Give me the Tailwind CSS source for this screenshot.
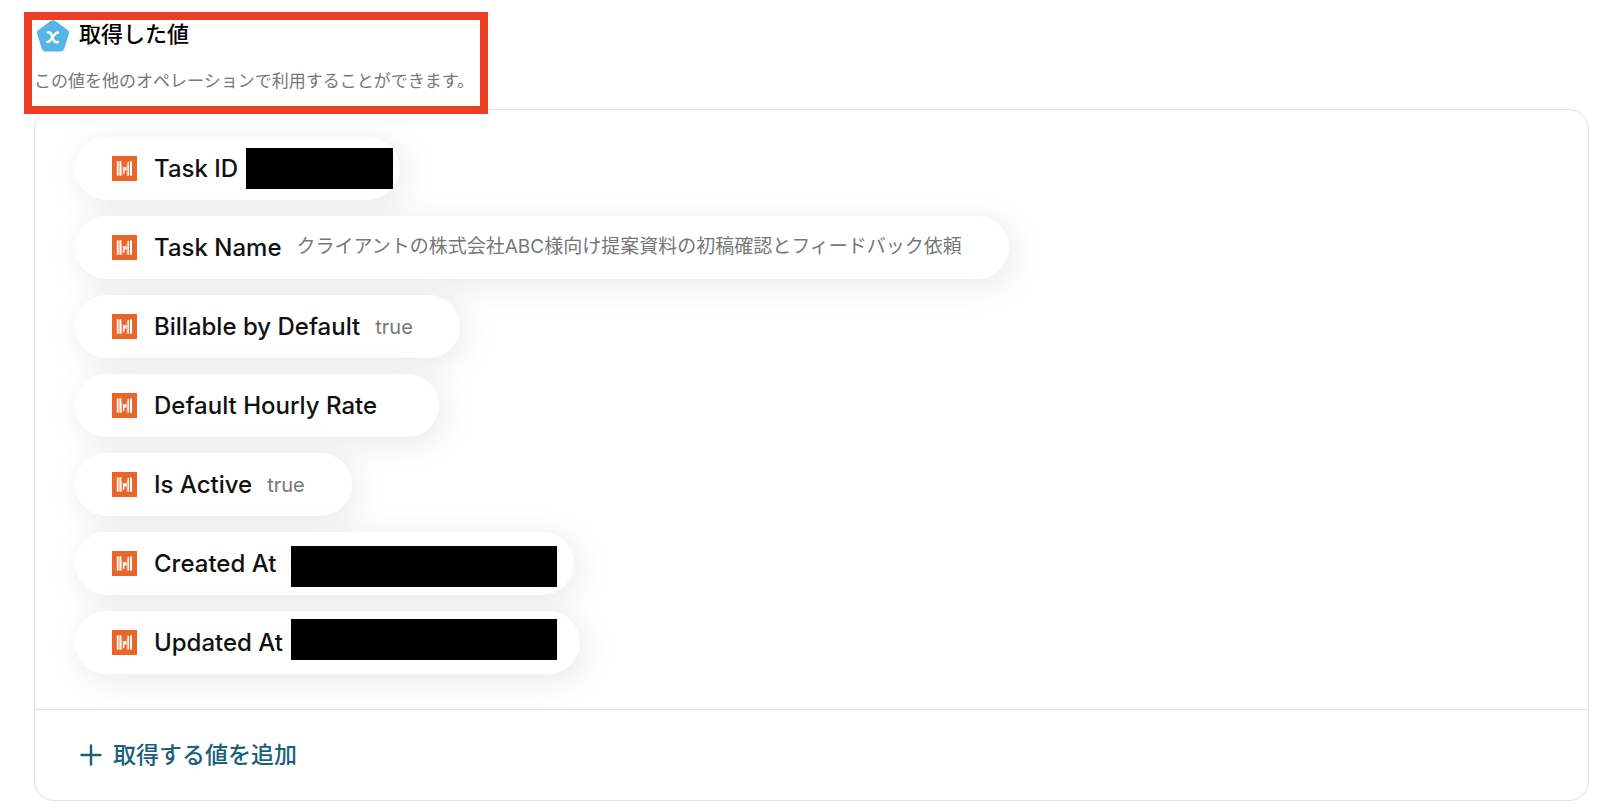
<!DOCTYPE html>
<html lang="ja">
<head>
  <meta charset="UTF-8">
  <title>取得した値</title>
  <script src="https://cdn.jsdelivr.net/npm/@tailwindcss/browser@4"></script>
</head>
<body class="min-h-screen bg-white pt-3 pb-2 font-['Inter','Noto_Sans_CJK_JP',sans-serif] text-[#111111]">
  <!-- Shared logo for every output value -->
  <svg class="hidden">
    <symbol id="logo" viewBox="0 0 25 25">
      <rect width="25" height="25" fill="#e8662a"/>
      <g fill="#fff">
        <rect x="4.8" y="5.3" width="1.8" height="14.4"/>
        <rect x="7.4" y="5.3" width="2" height="14.4"/>
        <rect x="9.4" y="9.5" width="1" height="10.2" opacity=".5"/>
        <path d="M11 11.2h3.6v3.2h-2.2v3.4H11z"/>
        <rect x="14.6" y="8.2" width=".9" height="11.5" opacity=".6"/>
        <rect x="15.5" y="5.9" width="1.6" height="13.8" opacity=".9"/>
        <rect x="18" y="5.3" width="2" height="14.4"/>
      </g>
    </symbol>
  </svg>

  <header class="relative z-10 ml-6 w-fit border-8 border-[#ee3d23] bg-white pr-[6px] pb-3 pl-[2px]">
    <div class="flex items-start gap-[10px] pl-[3px]">
      <svg class="size-8" viewBox="0 0 32 32">
        <path d="M13.6 1.1Q16 -.6 18.4 1.1L30.6 9.9Q32.6 11.4 31.9 13.7L27.2 28.8Q26.2 31.6 23.6 31.6H8.4Q5.8 31.6 4.8 28.8L.1 13.7Q-.6 11.4 1.4 9.9Z" fill="#54b6e4"/>
        <path d="M10.8 12.4c2.6-.3 3.4.6 4.6 4.6s2 5.5 5.4 5.1M21 12.4c-2.2 0-3.2 1.2-5.2 4.4s-3 5.2-5.4 5.2" fill="none" stroke="#fff" stroke-width="2.5" stroke-linecap="round"/>
      </svg>
      <h2 class="text-[22px] leading-7 font-medium text-black">取得した値</h2>
    </div>
    <p class="mt-4 text-[17px] leading-[26px] text-[#777777]">この値を他のオペレーションで利用することができます。</p>
  </header>

  <section class="-mt-[5px] mr-[11px] ml-[34px] rounded-[20px] border border-[#e0e0e0]">
    <ul class="flex flex-col items-start gap-4 px-10 pt-[27px] pb-[35px]">
      <li class="flex h-[63px] items-center rounded-full bg-white pr-[7px] pl-[37px] shadow-[5px_6px_36px_rgba(0,0,0,0.09)]">
        <svg class="size-[25px]"><use href="#logo"/></svg>
        <span class="ml-[17px] text-2xl font-medium">Task ID</span>
        <span class="ml-2 h-[41px] w-[147px] bg-black"></span>
      </li>
      <li class="flex h-[63px] items-center rounded-full bg-white pr-[47px] pl-[37px] shadow-[5px_6px_36px_rgba(0,0,0,0.09)]">
        <svg class="size-[25px]"><use href="#logo"/></svg>
        <span class="ml-[17px] text-2xl font-medium">Task Name</span>
        <span class="ml-[15px] text-[19px] text-[#777777]">クライアントの株式会社ABC様向け提案資料の初稿確認とフィードバック依頼</span>
      </li>
      <li class="flex h-[63px] items-center rounded-full bg-white pr-[47px] pl-[37px] shadow-[5px_6px_36px_rgba(0,0,0,0.09)]">
        <svg class="size-[25px]"><use href="#logo"/></svg>
        <span class="ml-[17px] text-2xl font-medium">Billable by Default</span>
        <span class="ml-[15px] text-xl text-[#777777]">true</span>
      </li>
      <li class="flex h-[63px] items-center rounded-full bg-white pr-[47px] pl-[37px] shadow-[5px_6px_36px_rgba(0,0,0,0.09)]">
        <svg class="size-[25px]"><use href="#logo"/></svg>
        <span class="ml-[17px] text-2xl font-medium">Default Hourly Rate</span>
        <span class="ml-[15px] text-xl text-[#777777]"></span>
      </li>
      <li class="flex h-[63px] items-center rounded-full bg-white pr-[47px] pl-[37px] shadow-[5px_6px_36px_rgba(0,0,0,0.09)]">
        <svg class="size-[25px]"><use href="#logo"/></svg>
        <span class="ml-[17px] text-2xl font-medium">Is Active</span>
        <span class="ml-[15px] text-xl text-[#777777]">true</span>
      </li>
      <li class="flex h-[63px] items-center rounded-full bg-white pr-[17px] pl-[37px] shadow-[5px_6px_36px_rgba(0,0,0,0.09)]">
        <svg class="size-[25px]"><use href="#logo"/></svg>
        <span class="ml-[17px] text-2xl font-medium">Created At</span>
        <span class="mb-2 ml-[15px] h-[41px] w-[266px] self-end bg-black"></span>
      </li>
      <li class="flex h-[63px] items-center rounded-full bg-white pr-[23px] pl-[37px] shadow-[5px_6px_36px_rgba(0,0,0,0.09)]">
        <svg class="size-[25px]"><use href="#logo"/></svg>
        <span class="ml-[17px] text-2xl font-medium">Updated At</span>
        <span class="mt-2 ml-2 h-[41px] w-[266px] self-start bg-black"></span>
      </li>
    </ul>

    <div class="border-t border-[#e0e0e0] px-[45px] py-7">
      <button type="button" class="flex items-center gap-[11px] text-[23px] leading-[34px] font-medium text-[#1b5f7d]">
        <svg class="size-[22px]" viewBox="0 0 22 22" fill="none" stroke="currentColor" stroke-width="2.4" stroke-linecap="round">
          <path d="M11 1.5v19M1.5 11h19"/>
        </svg>
        取得する値を追加
      </button>
    </div>
  </section>
</body>
</html>
